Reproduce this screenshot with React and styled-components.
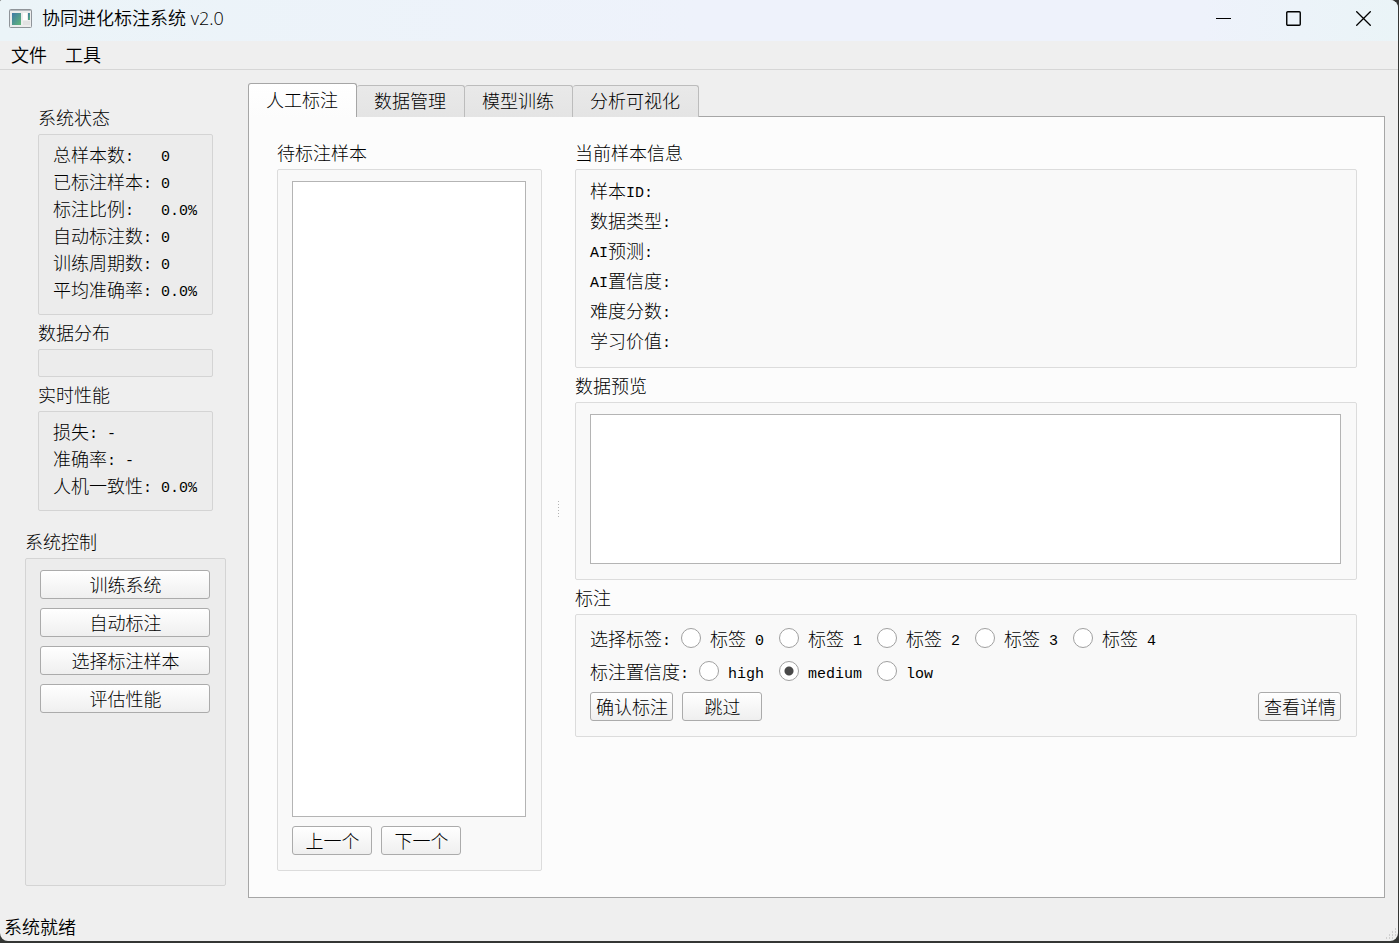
import React, { useState } from "react";
import styled, { createGlobalStyle } from "styled-components";

const Colors = {
  window: "#efefef",
  frame: "#dcdcdc",
  line: "#ababab",
  text: "#000000",
};

const tabNames = ["人工标注", "数据管理", "模型训练", "分析可视化"];

const statusRows = [
  ["总样本数:", "0"],
  ["已标注样本:", "0"],
  ["标注比例:", "0.0%"],
  ["自动标注数:", "0"],
  ["训练周期数:", "0"],
  ["平均准确率:", "0.0%"],
];

const performanceRows = ["损失: -", "准确率: -", "人机一致性: 0.0%"];

const controls = ["训练系统", "自动标注", "选择标注样本", "评估性能"];

const sampleRows = [
  "样本ID:",
  "数据类型:",
  "AI预测:",
  "AI置信度:",
  "难度分数:",
  "学习价值:",
];

const labels = ["标签 0", "标签 1", "标签 2", "标签 3", "标签 4"];
const confidences = ["high", "medium", "low"];

// latin runs are set in a half-width face, two letters per hanzi
const Mixed = ({ children }) =>
  children
    .split(/([\x20-\x7e]+)/)
    .filter(Boolean)
    .map((part, i) =>
      /^[\x20-\x7e]/.test(part) ? <Latin key={i}>{part}</Latin> : part
    );

const Group = ({ title, grow, inset, children }) => (
  <GroupBox $grow={grow} $inset={inset}>
    <GroupTitle>{title}</GroupTitle>
    {children}
  </GroupBox>
);

const RadioRow = ({ title, name, options, value, onChange }) => (
  <RadioSet role="radiogroup" aria-label={title}>
    <RadioTitle>
      <Mixed>{title}</Mixed>
    </RadioTitle>
    <RadioOptions>
      {options.map((option) => (
        <RadioLabel key={option}>
          <Radio
            type="radio"
            name={name}
            checked={value === option}
            onChange={() => onChange(option)}
          />
          <span>
            <Mixed>{option}</Mixed>
          </span>
        </RadioLabel>
      ))}
    </RadioOptions>
  </RadioSet>
);

const AppIcon = () => (
  <svg width="24" height="19" viewBox="0 0 24 19" aria-hidden="true">
    <defs>
      <linearGradient id="pane" x1="0" y1="0" x2="1" y2="1">
        <stop offset="0" stopColor="#3f79a8" />
        <stop offset="1" stopColor="#62b878" />
      </linearGradient>
    </defs>
    <rect x="0.5" y="0.5" width="22" height="18" rx="1" fill="#ededed" stroke="#8f9499" />
    <path d="M1 1.5h21" stroke="#b4babf" />
    <rect x="3" y="4" width="9" height="12" fill="url(#pane)" />
    <rect x="14" y="4" width="4" height="7" fill="#fff" />
    <rect x="14" y="12" width="7" height="4" fill="#e2e2e2" />
    <rect x="19" y="4" width="2" height="7" fill="url(#pane)" />
  </svg>
);

const Sidebar = () => (
  <SidebarContainer>
    <Group title="系统状态" inset>
      <Frame $dark $rows>
        <StatusList>
          {statusRows.map(([name, value]) => (
            <React.Fragment key={name}>
              <dt>
                <Mixed>{name}</Mixed>
              </dt>
              <dd>
                <Mixed>{value}</Mixed>
              </dd>
            </React.Fragment>
          ))}
        </StatusList>
      </Frame>
    </Group>
    <Group title="数据分布" inset>
      <EmptyFrame $dark />
    </Group>
    <Group title="实时性能" inset>
      <Frame $dark $rows>
        {performanceRows.map((row) => (
          <Line key={row} $height={27}>
            <Mixed>{row}</Mixed>
          </Line>
        ))}
      </Frame>
    </Group>
    <ControlArea>
      <Group title="系统控制" grow>
        <Frame $dark>
          {controls.map((name) => (
            <Button key={name}>{name}</Button>
          ))}
        </Frame>
      </Group>
    </ControlArea>
  </SidebarContainer>
);

const AnnotationPage = () => {
  const [label, setLabel] = useState(null);
  const [confidence, setConfidence] = useState("medium");

  return (
    <Page>
      <SampleColumn>
        <Group title="待标注样本" grow>
          <Frame>
            <SampleList aria-label="待标注样本" />
            <ButtonRow>
              <Button>上一个</Button>
              <Button>下一个</Button>
            </ButtonRow>
          </Frame>
        </Group>
      </SampleColumn>
      <Splitter>
        <svg width="1" height="16" aria-hidden="true">
          <path d="M0.5 0v16" stroke="#b4b4b4" strokeDasharray="1 2" />
        </svg>
      </Splitter>
      <DetailColumn>
        <Group title="当前样本信息">
          <Frame $rows>
            {sampleRows.map((row) => (
              <Line key={row} $height={30}>
                <Mixed>{row}</Mixed>
              </Line>
            ))}
          </Frame>
        </Group>
        <Group title="数据预览">
          <Frame>
            <Preview readOnly aria-label="数据预览" />
          </Frame>
        </Group>
        <Group title="标注">
          <Frame>
            <RadioRow
              title="选择标签:"
              name="label"
              options={labels}
              value={label}
              onChange={setLabel}
            />
            <RadioRow
              title="标注置信度:"
              name="confidence"
              options={confidences}
              value={confidence}
              onChange={setConfidence}
            />
            <ButtonRow>
              <Button>确认标注</Button>
              <Button>跳过</Button>
              <Spacer />
              <Button>查看详情</Button>
            </ButtonRow>
          </Frame>
        </Group>
      </DetailColumn>
    </Page>
  );
};

const App = () => {
  const [tab, setTab] = useState(0);

  return (
    <Desktop>
      <GlobalStyle />
      <Window>
        <TitleBar>
          <AppIcon />
          <Title>协同进化标注系统 v2.0</Title>
          <WindowButton aria-label="最小化">
            <svg width="15" height="15">
              <path d="M0 7.5h15" stroke="#000" />
            </svg>
          </WindowButton>
          <WindowButton aria-label="最大化">
            <svg width="15" height="15">
              <rect x="0.75" y="0.75" width="13.5" height="13.5" rx="1" fill="none" stroke="#000" strokeWidth="1.4" />
            </svg>
          </WindowButton>
          <WindowButton aria-label="关闭">
            <svg width="15" height="15">
              <path d="M0.3 0.3l14.4 14.4M14.7 0.3l-14.4 14.4" stroke="#000" strokeWidth="1.3" />
            </svg>
          </WindowButton>
        </TitleBar>
        <MenuBar>
          <MenuItem>文件</MenuItem>
          <MenuItem>工具</MenuItem>
        </MenuBar>
        <Body>
          <Sidebar />
          <TabWidget>
            <TabBar role="tablist">
              {tabNames.map((name, i) => (
                <Tab
                  key={name}
                  role="tab"
                  aria-selected={i === tab}
                  $active={i === tab}
                  onClick={() => setTab(i)}
                >
                  {name}
                </Tab>
              ))}
            </TabBar>
            <TabPanel role="tabpanel">{tab === 0 && <AnnotationPage />}</TabPanel>
          </TabWidget>
        </Body>
        <StatusBar>
          <StatusText>系统就绪</StatusText>
          <svg width="13" height="13" aria-hidden="true">
            <path
              d="M10 1h1M7 4h1M10 4h1M4 7h1M7 7h1M10 7h1M1 10h1M4 10h1M7 10h1"
              stroke="#b0b0b0"
            />
          </svg>
        </StatusBar>
      </Window>
    </Desktop>
  );
};

export default App;

const GlobalStyle = createGlobalStyle`
  * {
    box-sizing: border-box;
  }

  body {
    margin: 0;
    color: ${Colors["text"]};
    font-family: "Noto Sans CJK SC", sans-serif;
    font-size: 18px;
    font-weight: 300;
    line-height: 18px;
  }

  button, input, textarea {
    font: inherit;
    color: inherit;
  }
`;

const Latin = styled.span`
  font-family: "Liberation Mono", monospace;
  font-size: 15px;
  line-height: 15px;
  vertical-align: 1px;
  white-space: pre;
`;

const Desktop = styled.div`
  display: flex;
  min-height: 100vh;
  padding: 0 1px 2px 0;
  background: #343634;
`;

const Window = styled.div`
  flex: 1;
  display: flex;
  flex-direction: column;
  border-radius: 2px 8px 8px 8px;
  overflow: hidden;
  background: ${Colors["window"]};
`;

const TitleBar = styled.header`
  display: flex;
  align-items: center;
  height: 41px;
  padding: 0 0 5px 9px;
  background: linear-gradient(90deg, #ebf4f8 0%, #eef2fb 50%, #eef2fb 86%, #eaf4f7 100%);
`;

const Title = styled.div`
  flex: 1;
  padding-left: 9px;
  font-family: "Open Sans", "Noto Sans CJK SC", sans-serif;
  font-weight: 350;
  line-height: 24px;
`;

const WindowButton = styled.button`
  display: flex;
  align-items: center;
  justify-content: center;
  width: 70px;
  height: 36px;
  padding: 0;
  border: none;
  background: transparent;
`;

const MenuBar = styled.nav`
  display: flex;
  height: 29px;
  padding: 0 2px;
  border-bottom: 1px solid #d6d6d6;
`;

const MenuItem = styled.button`
  padding: 0 9px 2px;
  border: none;
  background: transparent;
  font-weight: 350;
`;

const Body = styled.main`
  flex: 1;
  display: flex;
  gap: 22px;
  padding: 13px 13px 14px 25px;
`;

const SidebarContainer = styled.aside`
  display: flex;
  flex-direction: column;
  gap: 9px;
  width: 201px;
  padding: 26px 0 12px;
`;

const ControlArea = styled.div`
  flex: 1;
  display: flex;
  flex-direction: column;
  padding-top: 13px;
`;

const GroupBox = styled.section`
  display: flex;
  flex-direction: column;
  flex: ${({ $grow }) => ($grow ? "1" : "none")};
  margin: ${({ $inset }) => ($inset ? "0 13px" : "0")};
`;

const GroupTitle = styled.h2`
  margin: 0;
  padding-bottom: 9px;
  font-size: 18px;
  font-weight: 300;
  line-height: 16px;
`;

const Frame = styled.div`
  flex: 1;
  display: flex;
  flex-direction: column;
  gap: ${({ $rows }) => ($rows ? "0" : "9px")};
  padding: ${({ $rows }) => ($rows ? "6px 14px 11px" : "11px 15px 15px 14px")};
  border: 1px solid ${({ $dark }) => ($dark ? "#d4d4d4" : Colors["frame"])};
  border-radius: 2px;
  background: ${({ $dark }) => ($dark ? "#ececec" : "#f9f9f9")};
`;

const EmptyFrame = styled(Frame)`
  flex: none;
  height: 28px;
  padding: 0;
`;

const StatusList = styled.dl`
  display: grid;
  grid-template-columns: auto 1fr;
  grid-auto-rows: 27px;
  column-gap: 9px;
  margin: 0;
  line-height: 26px;
  white-space: nowrap;

  dd {
    margin: 0;
  }
`;

const Line = styled.div`
  height: ${({ $height }) => $height}px;
  line-height: ${({ $height }) => $height - 1}px;
  white-space: nowrap;
`;

const Button = styled.button`
  height: 29px;
  min-width: 80px;
  padding: 0 4px 2px 5px;
  border: 1px solid ${Colors["line"]};
  border-radius: 3px;
  background: linear-gradient(#ffffff, #efefef);
  line-height: 24px;

  &:active {
    background: #e0e0e0;
  }
`;

const ButtonRow = styled.div`
  display: flex;
  gap: 9px;
`;

const Spacer = styled.div`
  flex: 1;
`;

const TabWidget = styled.section`
  flex: 1;
  display: flex;
  flex-direction: column;
  min-width: 0;
`;

const TabBar = styled.div`
  display: flex;
  align-items: flex-end;
  height: 34px;
  margin-bottom: -1px;
  z-index: 1;
`;

const Tab = styled.button`
  height: ${({ $active }) => ($active ? "34px" : "32px")};
  padding: 0 18px 3px 17px;
  border: 1px solid ${({ $active }) => ($active ? "#a6a6a6" : "#bcbcbc")};
  border-bottom: none;
  border-left-width: ${({ $active }) => ($active ? "1px" : "0")};
  border-radius: 3px 3px 0 0;
  background: ${({ $active }) =>
    $active ? "linear-gradient(#ffffff, #fcfcfc)" : "linear-gradient(#e9e9e9, #e4e4e4)"};
`;

const TabPanel = styled.div`
  flex: 1;
  display: flex;
  border: 1px solid #a6a6a6;
  background: #fcfcfc;
`;

const Page = styled.div`
  flex: 1;
  display: flex;
  padding: 27px 27px 26px 28px;
`;

const SampleColumn = styled.div`
  display: flex;
  flex-direction: column;
  width: 265px;
`;

const SampleList = styled.ul`
  flex: 1;
  margin: 0;
  padding: 0;
  border: 1px solid #b4b4b4;
  background: #ffffff;
  list-style: none;
`;

const Splitter = styled.div`
  display: flex;
  align-items: center;
  justify-content: center;
  width: 33px;
  padding-top: 2px;
`;

const DetailColumn = styled.div`
  flex: 1;
  display: flex;
  flex-direction: column;
  gap: 9px;
  min-width: 0;
`;

const Preview = styled.textarea`
  height: 150px;
  border: 1px solid #b4b4b4;
  outline: none;
  background: #ffffff;
  resize: none;
`;

const RadioSet = styled.div`
  display: flex;
  align-items: center;
  gap: 10px;
  height: 24px;
  line-height: 24px;
`;

const RadioTitle = styled.span`
  white-space: nowrap;
`;

const RadioOptions = styled.div`
  display: flex;
  gap: 15px;
`;

const RadioLabel = styled.label`
  display: flex;
  align-items: center;
  gap: 9px;
  white-space: nowrap;
`;

const Radio = styled.input`
  appearance: none;
  width: 20px;
  height: 20px;
  margin: 0;
  border: 1px solid #a0a0a0;
  border-radius: 50%;
  background: #ffffff;

  &:checked {
    background: radial-gradient(circle, #484848 4px, #ffffff 5px);
  }
`;

const StatusBar = styled.footer`
  display: flex;
  align-items: flex-end;
  justify-content: space-between;
  height: 29px;
  padding-left: 4px;
`;

const StatusText = styled.span`
  padding-bottom: 2px;
  font-weight: 350;
  line-height: 26px;
`;
